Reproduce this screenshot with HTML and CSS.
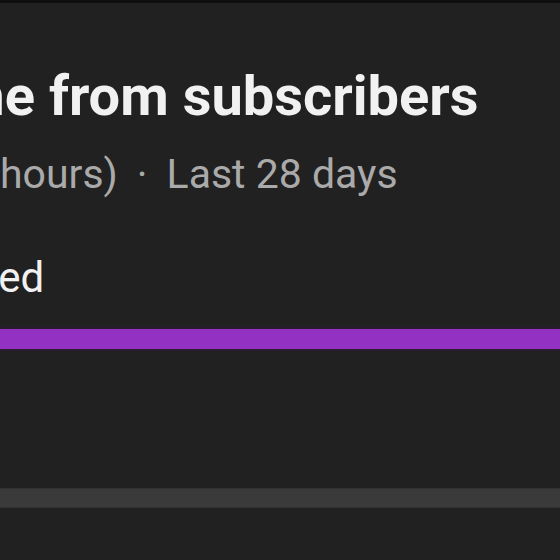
FILE: index.html
```html
<!DOCTYPE html>
<html lang="en">
<head>
    <meta charset="UTF-8">
    <meta name="viewport" content="width=device-width, initial-scale=1.0">
    <title>Watch time from subscribers</title>
    <link rel="stylesheet" href="styles.css">
</head>
<body>

    <div class="topbar"></div>

    <div class="card">
        <h1 class="card-title">Watch time from subscribers</h1>
        <p class="card-subtitle">Watch time (hours)<span class="sep">·</span>Last 28 days</p>

        <div class="row">
            <div class="row-label">Not subscribed</div>
            <div class="bar"><div class="bar-fill" style="width: 100%"></div></div>
        </div>

        <div class="row row-next">
            <div class="bar bar-empty"></div>
        </div>
    </div>

</body>
</html>
```

FILE: styles.css
```css
* {
    margin: 0;
    padding: 0;
    box-sizing: border-box;
}

body {
    background-color: #212121;
    color: #f1f1f1;
    font-family: Roboto, "Noto Sans", sans-serif;
    overflow: hidden;
    height: 560px;
}

.topbar {
    height: 3px;
    background-color: #0f0f0f;
}

.card {
    margin-left: -226px;
    width: 1200px;
    padding-top: 61px;
}

.card-title {
    margin-left: -23px;
    font-size: 56px;
    font-weight: 700;
    line-height: 64px;
    color: #f1f1f1;
    white-space: nowrap;
}

.card-subtitle {
    margin-top: 22px;
    margin-left: -5px;
    font-size: 41px;
    line-height: 48px;
    color: #aaaaaa;
    white-space: nowrap;
}

.sep {
    margin: 0 19px;
}

.row {
    margin-top: 55px;
}

.row-label {
    margin-left: -14px;
    font-size: 42px;
    line-height: 50px;
    color: #f1f1f1;
    white-space: nowrap;
}

.bar {
    margin-top: 24px;
    height: 24px;
    border-top: 2px solid #2a1d31;
    border-bottom: 2px solid #2a1d31;
}

.bar-fill {
    height: 100%;
    background-color: #9332c2;
}

.row-next {
    margin-top: 137px;
}

.bar-empty {
    margin-top: 0;
    height: 20px;
    border-top: 1px solid #333333;
    border-bottom: 1px solid #333333;
    background-color: #3a3a3a;
}
```
